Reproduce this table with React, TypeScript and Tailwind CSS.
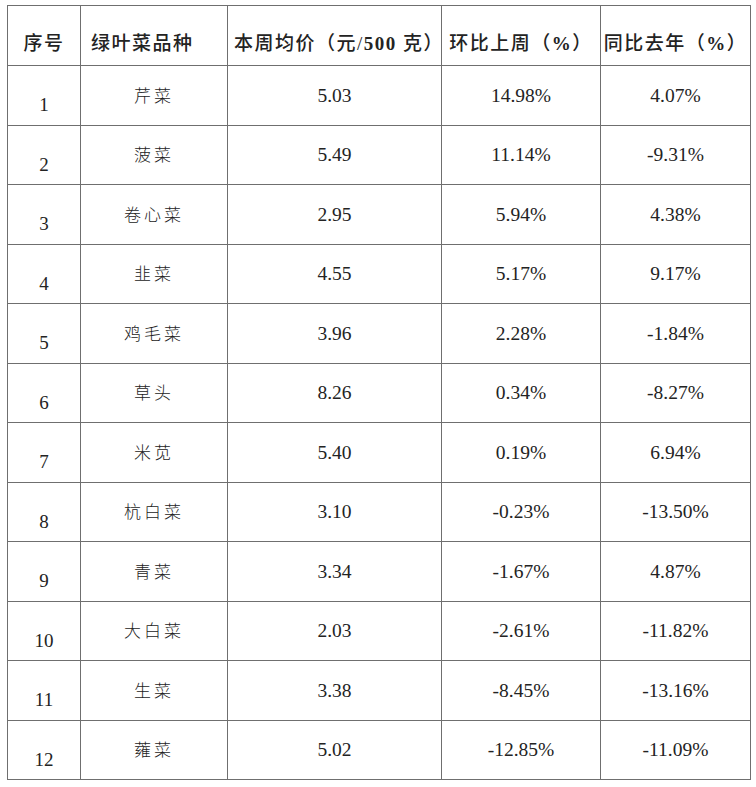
const rows: [string, string, string, string][] = [
	["芹菜", "5.03", "14.98%", "4.07%"],
	["菠菜", "5.49", "11.14%", "-9.31%"],
	["卷心菜", "2.95", "5.94%", "4.38%"],
	["韭菜", "4.55", "5.17%", "9.17%"],
	["鸡毛菜", "3.96", "2.28%", "-1.84%"],
	["草头", "8.26", "0.34%", "-8.27%"],
	["米苋", "5.40", "0.19%", "6.94%"],
	["杭白菜", "3.10", "-0.23%", "-13.50%"],
	["青菜", "3.34", "-1.67%", "4.87%"],
	["大白菜", "2.03", "-2.61%", "-11.82%"],
	["生菜", "3.38", "-8.45%", "-13.16%"],
	["蕹菜", "5.02", "-12.85%", "-11.09%"],
]

const font = "font-['Liberation_Serif','Noto_Sans_CJK_SC',serif]"

export default function App() {
	return (
		<div className={`min-h-[787px] w-[756px] bg-white pl-[7px] pt-[5px] text-[#232323] ${font}`}>
			<table className="w-[743px] table-fixed border-collapse border border-[#6f6f6f]">
				<colgroup>
					<col className="w-[73px]" />
					<col className="w-[147px]" />
					<col className="w-[214px]" />
					<col className="w-[159px]" />
					<col className="w-[150px]" />
				</colgroup>
				<thead>
					<tr className="h-[60px] text-[19px] leading-none tracking-[1.5px]">
						<th className="border border-[#6f6f6f] pt-[16px] text-center font-medium">序号</th>
						<th className="border border-[#6f6f6f] pl-[10px] pt-[16px] text-left font-medium">绿叶菜品种</th>
						<th className="border border-[#6f6f6f] pl-[6px] pt-[16px] text-center font-medium whitespace-nowrap">
							本周均价（元/<span className="font-bold">500</span> 克）
						</th>
						<th className="border border-[#6f6f6f] pt-[16px] text-center font-medium whitespace-nowrap">
							环比上周（<span className="font-bold">%</span>）
						</th>
						<th className="border border-[#6f6f6f] pt-[16px] text-center font-medium whitespace-nowrap">
							同比去年（<span className="font-bold">%</span>）
						</th>
					</tr>
				</thead>
				<tbody>
					{rows.map(([name, price, wow, yoy], i) => (
						<tr key={name} className="h-[59.5px] leading-none">
							<td className="border border-[#6f6f6f] pt-[19px] text-center text-[19px]">{i + 1}</td>
							<td className="border border-[#6f6f6f] pt-[2px] text-center text-[17px] font-light tracking-[3px]">{name}</td>
							<td className="border border-[#6f6f6f] text-center text-[19.5px]">{price}</td>
							<td className="border border-[#6f6f6f] text-center text-[19.5px]">{wow}</td>
							<td className="border border-[#6f6f6f] text-center text-[19.5px]">{yoy}</td>
						</tr>
					))}
				</tbody>
			</table>
		</div>
	)
}
